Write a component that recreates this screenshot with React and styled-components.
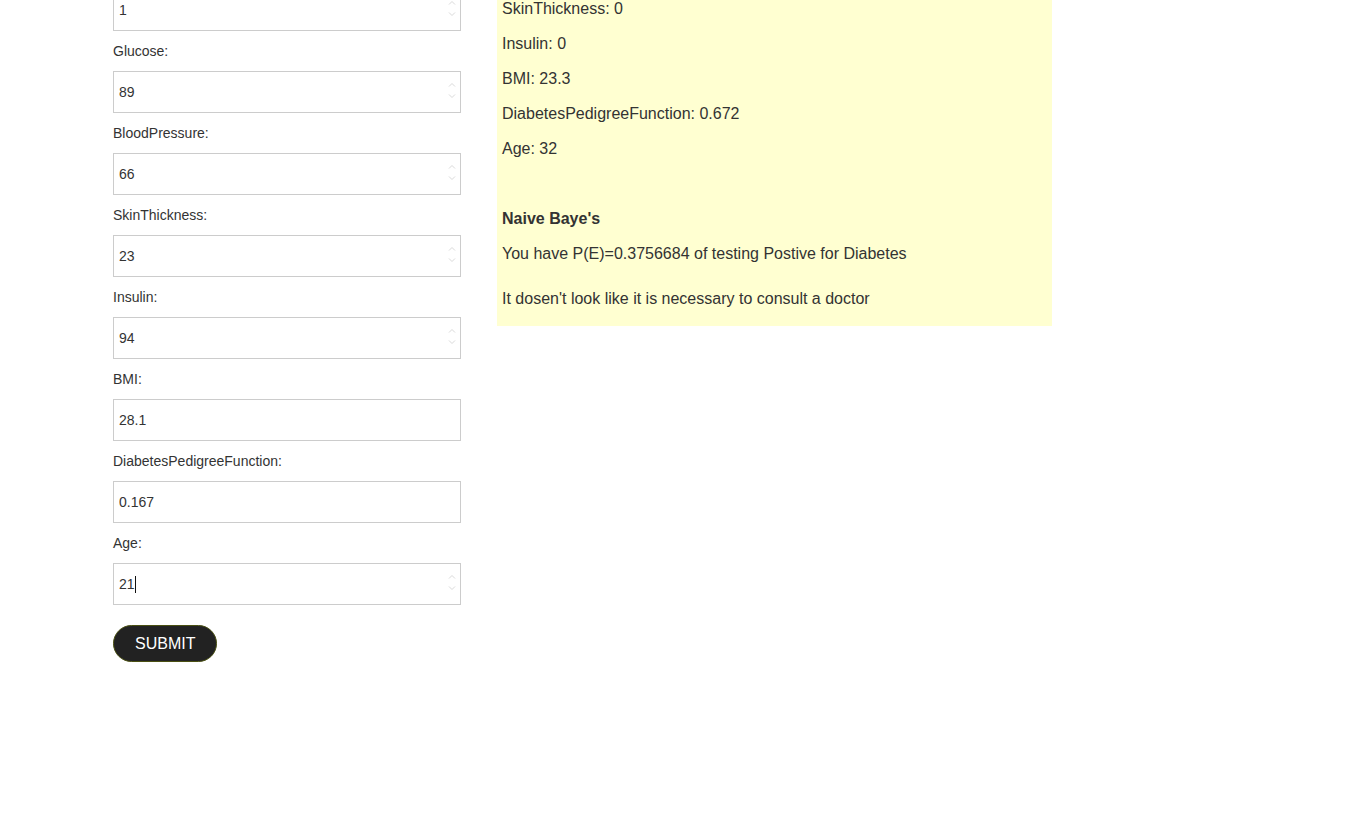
import styled, { createGlobalStyle } from "styled-components";

const GlobalStyle = createGlobalStyle`
  html, body {
    margin: 0;
    padding: 0;
    background: #fff;
    font-family: "Liberation Sans", Arial, sans-serif;
    color: #333;
  }
  body { overflow: hidden; }
`;

const fields = [
  { name: "Pregnancies", value: "1", spin: true },
  { name: "Glucose", value: "89", spin: true },
  { name: "BloodPressure", value: "66", spin: true },
  { name: "SkinThickness", value: "23", spin: true },
  { name: "Insulin", value: "94", spin: true },
  { name: "BMI", value: "28.1" },
  { name: "DiabetesPedigreeFunction", value: "0.167" },
  { name: "Age", value: "21", spin: true, focused: true },
];

const result = [
  ["Pregnancies", "8"],
  ["Glucose", "183"],
  ["BloodPressure", "64"],
  ["SkinThickness", "0"],
  ["Insulin", "0"],
  ["BMI", "23.3"],
  ["DiabetesPedigreeFunction", "0.672"],
  ["Age", "32"],
];

function Spinner() {
  return (
    <SpinIcon width="8" height="18" viewBox="0 0 8 18">
      <path d="M1 4.5 L4 1.5 L7 4.5" fill="none" stroke="#dadada" strokeWidth="1" />
      <path d="M1 12.5 L4 15.5 L7 12.5" fill="none" stroke="#dadada" strokeWidth="1" />
    </SpinIcon>
  );
}

export default function App() {
  return (
    <>
      <GlobalStyle />
      <Page>
        <Form onSubmit={(e) => e.preventDefault()}>
          {fields.map((f) => (
            <Field key={f.name}>
              <Label>{f.name}:</Label>
              <InputBox>
                <Input defaultValue={f.value} readOnly />
                {f.focused && <Caret $chars={f.value.length} />}
                {f.spin && <Spinner />}
              </InputBox>
            </Field>
          ))}
          <SubmitButton type="submit">SUBMIT</SubmitButton>
        </Form>
        <ResultPanel>
          {result.map(([k, v]) => (
            <Line key={k}>{k}: {v}</Line>
          ))}
          <Heading>Naive Baye's</Heading>
          <Line>You have P(E)=0.3756684 of testing Postive for Diabetes</Line>
          <Verdict>It dosen't look like it is necessary to consult a doctor</Verdict>
        </ResultPanel>
      </Page>
    </>
  );
}

const Page = styled.div`
  display: flex;
  align-items: flex-start;
  gap: 36px;
  padding-left: 113px;
  margin-top: -122px;
`;

const Form = styled.form`
  width: 348px;
  padding-top: 71px;
  display: flex;
  flex-direction: column;
`;

const Field = styled.div`
  display: flex;
  flex-direction: column;
`;

const Label = styled.label`
  display: block;
  font-size: 14px;
  line-height: 20px;
  margin: 10px 0;
  color: #333;
`;

const InputBox = styled.div`
  position: relative;
  height: 42px;
`;

const Input = styled.input`
  box-sizing: border-box;
  width: 100%;
  height: 42px;
  border: 1px solid #cccccc;
  padding: 0 5px;
  margin: 0;
  font-family: "Liberation Sans", Arial, sans-serif;
  font-size: 14px;
  color: #333;
  background: #fff;
  outline: none;
`;

const Caret = styled.span`
  position: absolute;
  left: ${(p) => 6 + p.$chars * 7.8}px;
  top: 13px;
  width: 1px;
  height: 17px;
  background: #111;
`;

const SpinIcon = styled.svg`
  position: absolute;
  right: 5px;
  top: 11px;
`;

const SubmitButton = styled.button`
  align-self: flex-start;
  margin-top: 20px;
  height: 37px;
  padding: 0 21px;
  border: 1px solid #4a5012;
  border-radius: 19px;
  background: #222;
  color: #fff;
  font-family: "Liberation Sans", Arial, sans-serif;
  font-size: 16px;
  cursor: pointer;
`;

const ResultPanel = styled.div`
  display: flow-root;
  width: 545px;
  padding: 0 5px 2px;
  background: #ffffd1;
`;

const Line = styled.p`
  margin: 16px 0;
  font-size: 16px;
  line-height: 19px;
  color: #333;
`;

const Heading = styled.h4`
  margin: 51px 0 16px;
  font-size: 16px;
  line-height: 19px;
  font-weight: bold;
  color: #333;
`;

const Verdict = styled(Line)`
  margin-top: 26px;
`;
